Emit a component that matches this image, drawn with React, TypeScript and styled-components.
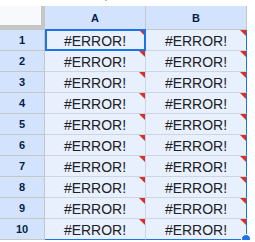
import React from "react";
import styled, { createGlobalStyle } from "styled-components";

const GlobalStyle = createGlobalStyle`
  html, body {
    margin: 0;
    padding: 0;
    background: #ffffff;
    font-family: "Liberation Sans", Arial, sans-serif;
  }
`;

const TopStrip = styled.div`
  height: 6px;
  position: relative;
  & > span {
    position: absolute;
    left: 105px;
    top: 0;
    width: 2px;
    height: 1px;
    background: #b8bcc2;
  }
`;

const Sheet = styled.div`
  display: grid;
  grid-template-columns: 45px 101px 101px;
  grid-template-rows: 24px repeat(10, 21px);
`;

const Corner = styled.div`
  background: #f8f9fa;
  border-right: 4px solid #c4c7c5;
  border-bottom: 5px solid #c4c7c5;
`;

const ColHeader = styled.div`
  background: #d3e3fd;
  border-right: 1px solid #c4c7c5;
  border-bottom: 1px solid #c4c7c5;
  display: flex;
  align-items: center;
  justify-content: center;
  font-size: 11px;
  font-weight: bold;
  color: #041e49;
  padding-top: 1px;
`;

const RowHeader = styled.div`
  background: #d3e3fd;
  border-right: 1px solid #c4c7c5;
  border-bottom: 1px solid #c4c7c5;
  display: flex;
  align-items: center;
  justify-content: center;
  font-size: 11px;
  font-weight: bold;
  color: #041e49;
`;

const Cell = styled.div<{ lastCol: boolean; lastRow: boolean }>`
  position: relative;
  background: #e8f0fe;
  border-right: 1px solid ${(p) => (p.lastCol ? "#1a73e8" : "#cbd5e6")};
  border-bottom: 1px solid ${(p) => (p.lastRow ? "#1a73e8" : "#cbd5e6")};
  display: flex;
  align-items: center;
  justify-content: center;
  font-size: 14px;
  color: #202124;
  padding-top: 1px;
`;

const ErrorMark = styled.span`
  position: absolute;
  top: 0;
  right: 0;
  width: 0;
  height: 0;
  border-top: 6px solid #d93025;
  border-left: 6px solid transparent;
`;

const ActiveBorder = styled.span`
  position: absolute;
  left: 0;
  top: -1px;
  right: -1px;
  bottom: -1px;
  border: 2px solid #1a73e8;
  pointer-events: none;
`;

const FillHandle = styled.span`
  position: absolute;
  right: -5px;
  bottom: -5px;
  width: 8px;
  height: 8px;
  border-radius: 50%;
  background: #1a73e8;
  border: 1px solid #ffffff;
  z-index: 2;
`;

const columns = ["A", "B"];
const rows = Array.from({ length: 10 }, (_, i) => i + 1);

export default function App() {
  return (
    <>
      <GlobalStyle />
      <TopStrip>
        <span />
      </TopStrip>
      <Sheet>
        <Corner />
        {columns.map((c) => (
          <ColHeader key={c}>{c}</ColHeader>
        ))}
        {rows.map((r) => (
          <React.Fragment key={r}>
            <RowHeader>{r}</RowHeader>
            {columns.map((c, ci) => (
              <Cell key={c} lastCol={ci === columns.length - 1} lastRow={r === rows.length}>
                #ERROR!
                <ErrorMark />
                {r === 1 && ci === 0 && <ActiveBorder />}
                {r === rows.length && ci === columns.length - 1 && <FillHandle />}
              </Cell>
            ))}
          </React.Fragment>
        ))}
      </Sheet>
    </>
  );
}
